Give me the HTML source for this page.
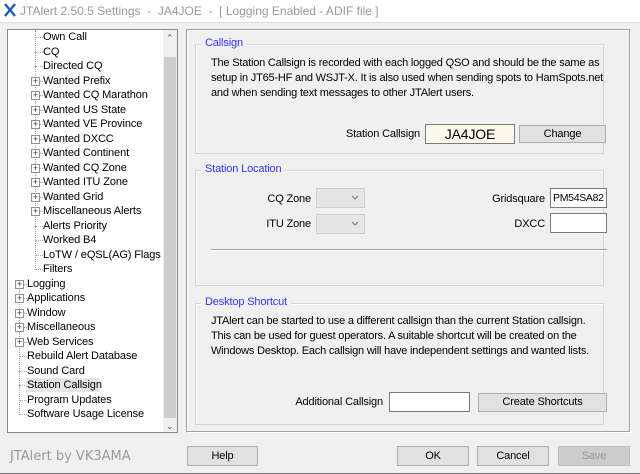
<!DOCTYPE html>
<html><head><style>
*{margin:0;padding:0;box-sizing:border-box}
body{width:640px;height:474px;background:#f0f0f0;font-family:"Liberation Sans","DejaVu Sans",sans-serif;font-size:11px;letter-spacing:-0.15px;color:#000;position:relative;overflow:hidden}
.a{position:absolute;white-space:nowrap}
.r{text-align:right}
.title{left:0;top:0;width:640px;height:22px;background:#fff}
.tree{left:7px;top:29px;width:171px;height:404px;background:#fff;border:1px solid #828790}
.sb{left:163px;top:30px;width:14px;height:402px;background:#f0f0f0}
.thumb{left:164px;top:57px;width:12px;height:361px;background:#cdcdcd}
.ti{font-size:11px;line-height:14px;letter-spacing:-0.1px}
.pb{width:9px;height:9px;border:1px solid #919191;background:#fff;font-size:9px;line-height:7px;text-align:center;color:#333;letter-spacing:0}
.dl{border-top:1px dotted #a0a0a0;width:8px;height:0}
.panel{left:186px;top:29px;width:445px;height:404px;border:1px solid #a0a0a0;border-right-color:#fff;border-bottom-color:#fff;box-shadow:inset -1px -1px 0 #a0a0a0,inset 1px 1px 0 #fff}
.gb{border:1px solid #d5d5d5;box-shadow:inset 1px 1px 0 #fff}
.gt{color:#3333ff;background:#f0f0f0;padding:0 4px;font-size:11px}
.btn{background:#e1e1e1;border:1px solid #adadad;text-align:center;line-height:18px;font-size:11px}
.cb{background:#e5e5e5;border:1px solid #cfcfcf}
.tb{background:#fff;border:1px solid #7a7a7a}
.p{line-height:15px;font-size:11px;letter-spacing:-0.2px}
</style></head><body>
<div class="a title"></div>
<svg class="a" style="left:3px;top:3px" width="14" height="14"><path d="M2 1L12 13M12 1L2 13" stroke="#1a5fb4" stroke-width="2.4"/></svg>
<div class="a" style="left:20px;top:4px;color:#999;font-size:12px;letter-spacing:0">JTAlert 2.50.5 Settings &nbsp;- &nbsp;JA4JOE &nbsp;- &nbsp;[ Logging Enabled - ADIF file ]</div>
<div class="a" style="left:0;top:22px;width:640px;height:1px;background:#ddd"></div>

<div class="a tree"></div>
<div class="a sb"></div>
<div class="a thumb"></div>
<div class="a" style="left:166px;top:33px;font-size:9px;color:#555">&#8963;</div>
<div class="a" style="left:166px;top:421px;font-size:9px;color:#555">&#8964;</div>
<div class="a" style="left:35px;top:30px;height:240px;border-left:1px dotted #a0a0a0"></div>
<div class="a" style="left:19px;top:282px;height:133px;border-left:1px dotted #a0a0a0"></div>

<div id="tree"></div>
<script>
var c=["Own Call","CQ","Directed CQ","+Wanted Prefix","+Wanted CQ Marathon","+Wanted US State","+Wanted VE Province","+Wanted DXCC","+Wanted Continent","+Wanted CQ Zone","+Wanted ITU Zone","+Wanted Grid","+Miscellaneous Alerts","Alerts Priority","Worked B4","LoTW / eQSL(AG) Flags","Filters"];
var t=["+Logging","+Applications","+Window","+Miscellaneous","+Web Services","Rebuild Alert Database","Sound Card","Station Callsign","Program Updates","Software Usage License"];
var h="",y=37;
function row(s,x){var p=s[0]=="+";if(p)s=s.slice(1);var cy=Math.round(y);
h+='<div class="a dl" style="left:'+(x-8)+'px;top:'+(cy)+'px"></div>';
if(p)h+='<div class="a pb" style="left:'+(x-12)+'px;top:'+(cy-4)+'px">+</div>';
if(s=="Station Callsign")h+='<div class="a" style="left:'+(x-1)+'px;top:'+(cy-7)+'px;width:74px;height:14px;background:#e5e5e5"></div>';
h+='<div class="a ti" style="left:'+x+'px;top:'+(cy-7)+'px">'+s+'</div>';y+=14.5;}
c.forEach(function(s){row(s,43)});t.forEach(function(s){row(s,27)});
document.getElementById("tree").innerHTML=h;
</script>

<div class="a panel"></div>

<div class="a gb" style="left:195px;top:44px;width:409px;height:110px"></div>
<div class="a gt" style="left:201px;top:37px">Callsign</div>
<div class="a p" style="left:211px;top:56px">The Station Callsign is recorded with each logged QSO and should be the same as<br>setup in JT65-HF and WSJT-X. It is also used when sending spots to HamSpots.net<br>and when sending text messages to other JTAlert users.</div>
<div class="a r" style="right:220px;top:128px">Station Callsign</div>
<div class="a" style="left:425px;top:124px;width:90px;height:20px;background:#fdf8ec;border:1px solid #7a7a7a;text-align:center;font-size:14px;line-height:18px">JA4JOE</div>
<div class="a btn" style="left:519px;top:125px;width:87px;height:18px;line-height:16px">Change</div>

<div class="a gb" style="left:195px;top:170px;width:409px;height:116px"></div>
<div class="a gt" style="left:201px;top:163px">Station Location</div>
<div class="a r" style="right:329px;top:193px">CQ Zone</div>
<div class="a cb" style="left:316px;top:188px;width:49px;height:20px"></div>
<svg class="a" style="left:351px;top:195px" width="8" height="6"><path d="M1 1L4 4L7 1" stroke="#777" fill="none"/></svg>
<div class="a r" style="right:329px;top:218px">ITU Zone</div>
<div class="a cb" style="left:316px;top:214px;width:49px;height:20px"></div>
<svg class="a" style="left:351px;top:221px" width="8" height="6"><path d="M1 1L4 4L7 1" stroke="#777" fill="none"/></svg>
<div class="a r" style="right:95px;top:193px">Gridsquare</div>
<div class="a tb" style="left:550px;top:188px;width:57px;height:20px;font-size:10.5px;line-height:18px;padding-left:2px;letter-spacing:-0.3px">PM54SA82</div>
<div class="a r" style="right:95px;top:218px">DXCC</div>
<div class="a tb" style="left:550px;top:213px;width:57px;height:20px"></div>
<div class="a" style="left:211px;top:249px;width:396px;height:2px;border-top:1px solid #a0a0a0;border-bottom:1px solid #fff"></div>

<div class="a gb" style="left:195px;top:303px;width:409px;height:122px"></div>
<div class="a gt" style="left:201px;top:296px">Desktop Shortcut</div>
<div class="a p" style="left:211px;top:314px">JTAlert can be started to use a different callsign than the current Station callsign.<br>This can be used for guest operators. A suitable shortcut will be created on the<br>Windows Desktop. Each callsign will have independent settings and wanted lists.</div>
<div class="a r" style="right:257px;top:396px">Additional Callsign</div>
<div class="a tb" style="left:389px;top:392px;width:81px;height:20px"></div>
<div class="a btn" style="left:478px;top:393px;width:129px;height:19px;line-height:17px">Create Shortcuts</div>

<div class="a" style="left:10px;top:449px;color:#999;font-size:13px;letter-spacing:0;font-family:'DejaVu Sans',sans-serif">JTAlert by VK3AMA</div>
<div class="a btn" style="left:187px;top:446px;width:71px;height:20px">Help</div>
<div class="a btn" style="left:397px;top:446px;width:72px;height:20px">OK</div>
<div class="a btn" style="left:477px;top:446px;width:72px;height:20px">Cancel</div>
<div class="a btn" style="left:558px;top:446px;width:72px;height:20px;background:#ccc;border-color:#bfbfbf;color:#999">Save</div>
<div class="a" style="left:0;top:473px;width:640px;height:1px;background:#777"></div>
</body></html>
